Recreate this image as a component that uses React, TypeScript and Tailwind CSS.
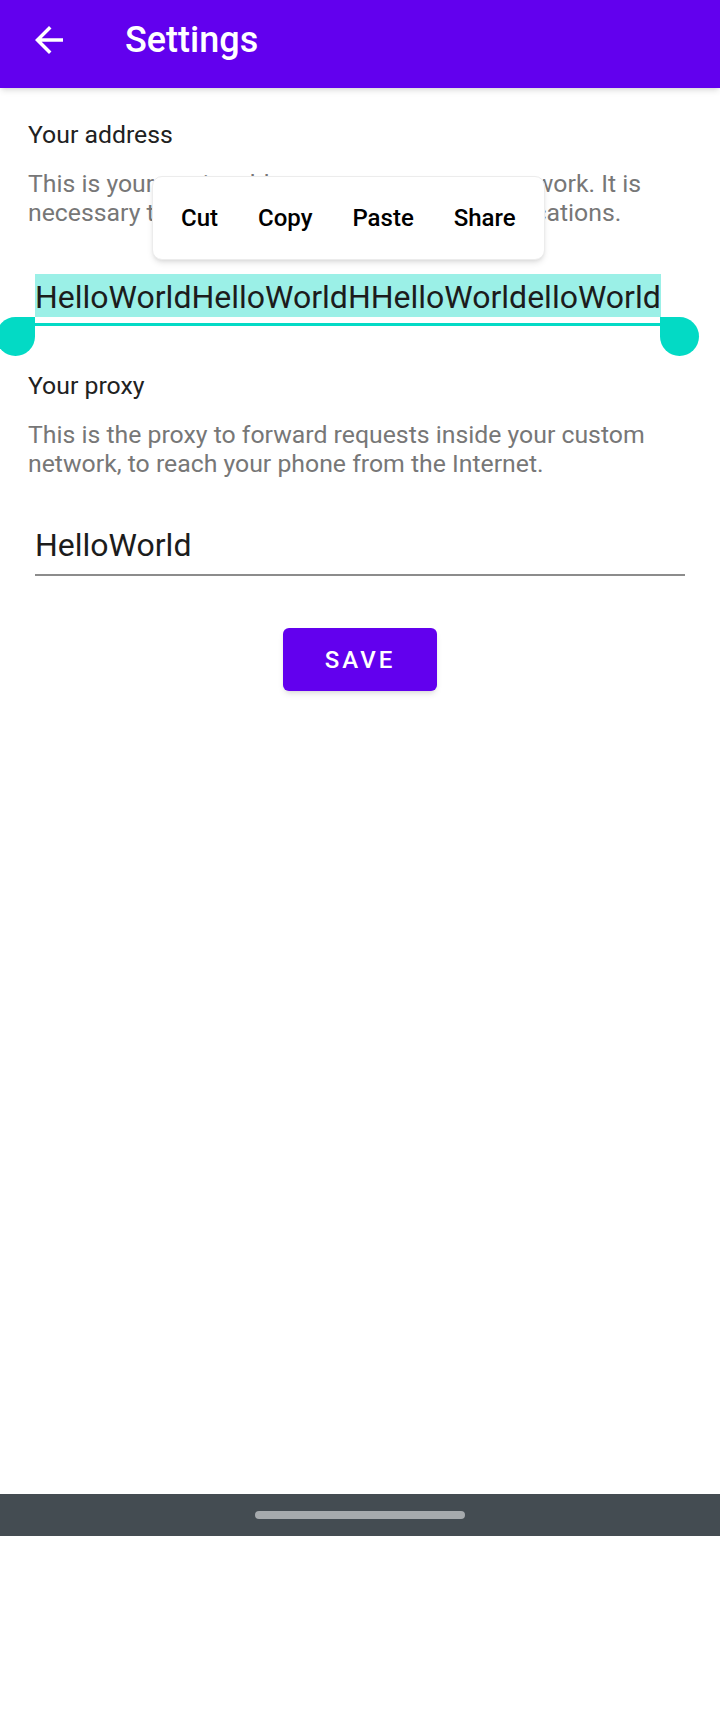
function BackArrow() {
  return (
    <svg viewBox="0 0 24 24" className="h-[42px] w-[42px] fill-white">
      <path d="M20 11H7.83l5.59-5.59L12 4l-8 8 8 8 1.41-1.41L7.83 13H20v-2z" />
    </svg>
  );
}

function SelectionMenu() {
  return (
    <div className="absolute left-[152px] top-[176px] z-20 flex h-[84px] w-[393px] items-center rounded-[10px] border border-[#ececec] bg-white px-[8px] shadow-md">
      <span className="px-[20px] text-[24px] font-medium text-black">Cut</span>
      <span className="px-[20px] text-[24px] font-medium text-black">Copy</span>
      <span className="px-[20px] text-[24px] font-medium text-black">Paste</span>
      <span className="px-[20px] text-[24px] font-medium text-black">Share</span>
    </div>
  );
}

export default function App() {
  return (
    <div className="relative flex h-[1712px] w-[720px] flex-col overflow-hidden bg-white font-[Roboto,sans-serif]">
      <header className="z-10 flex h-[88px] shrink-0 items-center bg-[#6200ee] pb-[8px] pl-[28px] shadow-md">
        <BackArrow />
        <h1 className="ml-[55px] text-[36px] font-medium leading-none text-white">Settings</h1>
      </header>

      <main className="flex flex-1 flex-col px-[28px] pt-[33px]">
        <p className="text-[24.8px] leading-[28px] text-[#212121]">Your address</p>
        <p className="mt-[20px] text-[24.8px] leading-[29px] text-[#777777]">
          This is your static address on your custom network. It is
          <br />
          necessary to accept requests from other applications.
        </p>

        <div className="mx-[7px] mt-[47px]">
          <div className="h-[43px] overflow-hidden whitespace-nowrap">
            <span className="inline-block h-[43px] bg-[#9bf0e7] pt-[4px] text-[32px] leading-[39px] text-[#1c1c1c]">
              HelloWorldHelloWorldHHelloWorldelloWorld
            </span>
          </div>
          <div className="mt-[6px] h-[3px] bg-[#03dac5]" />
        </div>

        <p className="mt-[46px] text-[24.8px] leading-[28px] text-[#212121]">Your proxy</p>
        <p className="mt-[20px] text-[24.8px] leading-[29px] text-[#777777]">
          This is the proxy to forward requests inside your custom network, to reach your phone from the Internet.
        </p>

        <div className="mx-[7px] mt-[44px]">
          <div className="h-[43px] overflow-hidden whitespace-nowrap">
            <span className="inline-block h-[43px] pt-[4px] text-[32px] leading-[39px] text-[#1c1c1c]">HelloWorld</span>
          </div>
          <div className="mt-[9px] h-[2px] bg-[#8c8c8c]" />
        </div>

        <button className="mt-[52px] flex h-[63px] w-[154px] items-center justify-center self-center rounded-[6px] bg-[#6200ee] text-[24px] font-medium tracking-[3px] text-white shadow-md">
          SAVE
        </button>
      </main>

      <div className="flex h-[42px] shrink-0 items-center justify-center bg-[#444c52]">
        <div className="h-[8px] w-[210px] rounded-full bg-[#a6aaad]" />
      </div>
      <div className="h-[176px] shrink-0 bg-white" />

      <SelectionMenu />
      <div className="absolute left-[-4px] top-[317px] h-[39px] w-[39px] rounded-[50%] rounded-tr-none bg-[#03dac5]" />
      <div className="absolute left-[660px] top-[317px] h-[39px] w-[39px] rounded-[50%] rounded-tl-none bg-[#03dac5]" />
    </div>
  );
}
